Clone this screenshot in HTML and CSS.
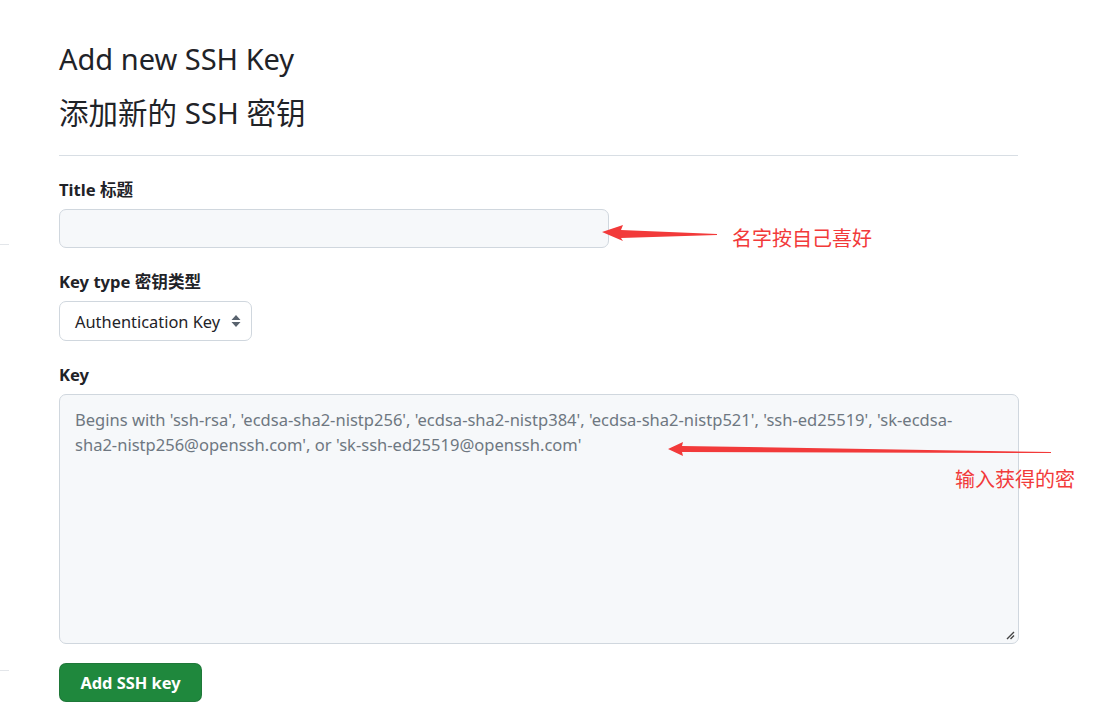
FILE: index.html
```html
<!DOCTYPE html>
<html lang="zh">
<head>
<meta charset="utf-8">
<link rel="stylesheet" href="styles.css">
</head>
<body>
<div class="page">
  <h1 class="title">Add new SSH Key</h1>
  <h2 class="title-cn">添加新的 SSH 密钥</h2>
  <hr class="divider">
  <form class="form">
    <label class="label">Title 标题</label>
    <div class="input"></div>
    <label class="label">Key type 密钥类型</label>
    <div class="select">
      <span>Authentication Key</span>
      <svg class="caret" width="10" height="16" viewBox="0 0 10 16"><path d="M5 2 L9.5 7 L0.5 7 Z M5 14 L9.5 9 L0.5 9 Z" fill="#59636e"/></svg>
    </div>
    <label class="label">Key</label>
    <div class="textarea">
      <p class="placeholder">Begins with 'ssh-rsa', 'ecdsa-sha2-nistp256', 'ecdsa-sha2-nistp384', 'ecdsa-sha2-nistp521', 'ssh-ed25519', 'sk-ecdsa-sha2-nistp256@openssh.com', or 'sk-ssh-ed25519@openssh.com'</p>
      <svg class="grip" width="10" height="10" viewBox="0 0 10 10"><path d="M9 2 L2 9 M9 5.5 L5.5 9" stroke="#444" stroke-width="1.4"/></svg>
    </div>
    <div class="button">Add SSH key</div>
  </form>

  <svg class="arrow arrow-1" width="130" height="30" viewBox="0 0 130 30">
    <path d="M6 12 L27 5 L25 10 L121 14 L121 15 L25 18 L27 21 Z" fill="#f23a3a"/>
  </svg>
  <div class="note note-1">名字按自己喜好</div>

  <svg class="arrow arrow-2" width="400" height="30" viewBox="0 0 400 30">
    <path d="M6 10 L21 3 L20 7 L389 13 L389 14 L20 13 L21 17 Z" fill="#f23a3a"/>
  </svg>
  <div class="note note-2">输入获得的密</div>

  <span class="edge edge-1"></span>
  <span class="edge edge-2"></span>
</div>
</body>
</html>
```

FILE: styles.css
```css
* { box-sizing: border-box; }
html, body { margin: 0; padding: 0; background: #fff; }
body {
  font-family: "Noto Sans", "Open Sans", "Noto Sans CJK SC", sans-serif;
  color: #1f2328;
}
.page {
  position: relative;
  width: 1111px;
  height: 721px;
  padding: 38px 0 0 59px;
  overflow: hidden;
}
.title {
  margin: 0;
  font-weight: 400;
  font-size: 29px;
  line-height: 42px;
  font-family: "Noto Sans", "Noto Sans CJK SC", sans-serif;
}
.title-cn {
  margin: 12px 0 0;
  font-weight: 400;
  font-size: 29.5px;
  line-height: 42px;
  font-family: "Noto Sans", "Noto Sans CJK SC", sans-serif;
}
.divider {
  margin: 21px 0 0;
  width: 959px;
  border: 0;
  border-top: 1px solid #d8dee4;
}
.form {
  display: flex;
  flex-direction: column;
  align-items: flex-start;
  width: 959px;
  padding-top: 22px;
}
.label {
  font-weight: 700;
  font-size: 16.6px;
  line-height: 24px;
  margin-bottom: 7px;
}
.input {
  width: 550px;
  height: 39px;
  background: #f6f8fa;
  border: 1px solid #d0d7de;
  border-radius: 7px;
  margin-bottom: 22px;
}
.select {
  display: flex;
  align-items: center;
  justify-content: space-between;
  width: 193px;
  height: 40px;
  padding: 0 10px 0 15px;
  border: 1px solid #d0d7de;
  border-radius: 7px;
  font-size: 16.4px;
  color: #1f2328;
  margin-bottom: 22px;
}
.caret { display: block; }
.textarea {
  position: relative;
  width: 960px;
  height: 250px;
  background: #f6f8fa;
  border: 1px solid #d0d7de;
  border-radius: 7px;
  padding: 12px 40px 12px 15px;
  margin-bottom: 19px;
}
.placeholder {
  margin: 0;
  font-size: 16.55px;
  line-height: 25px;
  color: #6e7781;
}
.grip {
  position: absolute;
  right: 3px;
  bottom: 3px;
}
.button {
  display: flex;
  align-items: center;
  justify-content: center;
  width: 143px;
  height: 39px;
  background: #1f883d;
  border: 1px solid rgba(31,35,40,0.15);
  border-radius: 7px;
  color: #fff;
  font-weight: 700;
  font-size: 16.4px;
}
.arrow { position: absolute; }
.arrow-1 { left: 596px; top: 220px; }
.arrow-2 { left: 662px; top: 439px; }
.note {
  position: absolute;
  font-family: "Noto Sans CJK SC", sans-serif;
  font-size: 20px;
  line-height: 24px;
  color: #f23a3a;
}
.note-1 { left: 732px; top: 226px; }
.note-2 { left: 955px; top: 467px; }
.edge {
  position: absolute;
  left: 0;
  width: 9px;
  height: 1px;
  background: #e3e6ea;
}
.edge-1 { top: 244px; }
.edge-2 { top: 670px; }
```
